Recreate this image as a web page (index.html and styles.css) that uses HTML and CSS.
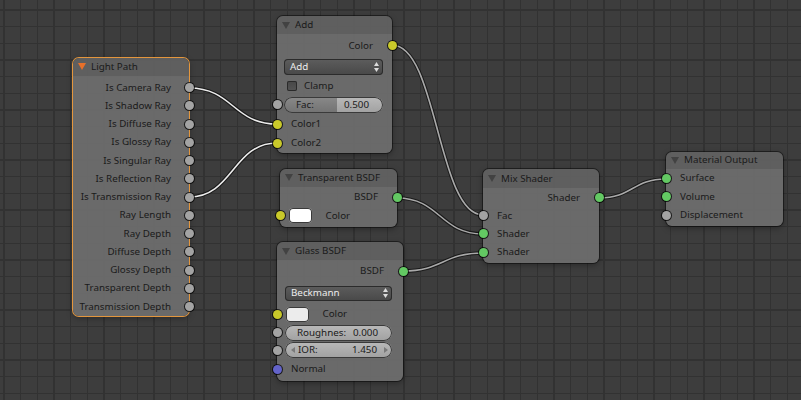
FILE: index.html
```html
<!DOCTYPE html>
<html>
<head>
<meta charset="utf-8">
<link rel="stylesheet" href="styles.css">
</head>
<body>
<div class="canvas">
  <svg class="links" width="801" height="400" viewBox="0 0 801 400">
    <g class="wire-outer">
      <path d="M189,88 C233,88 233,124 277,124"/>
      <path d="M189,197 C233,197 233,143 277,143"/>
      <path d="M392,45 C437.5,45 437.5,215 483,215"/>
      <path d="M397,198 C440,198 440,234 483,234"/>
      <path d="M403,271 C443,271 443,253 483,253"/>
      <path d="M599,198 C632.5,198 632.5,179 666,179"/>
    </g>
    <g class="wire-inner hi">
      <path d="M189,88 C233,88 233,124 277,124"/>
      <path d="M189,197 C233,197 233,143 277,143"/>
    </g>
    <g class="wire-inner">
      <path d="M392,45 C437.5,45 437.5,215 483,215"/>
      <path d="M397,198 C440,198 440,234 483,234"/>
      <path d="M403,271 C443,271 443,253 483,253"/>
      <path d="M599,198 C632.5,198 632.5,179 666,179"/>
    </g>
  </svg>

  <!-- Light Path -->
  <div class="node n-light active">
    <div class="head"><svg class="tri" width="8" height="7" viewBox="0 0 8 7"><path d="M0,0 L8,0 L4,7 Z"/></svg><span>Light Path</span></div>
    <div class="rows lp-rows">
      <div class="row out lp"><span>Is Camera Ray</span><i class="sock s-grey"></i></div>
      <div class="row out lp"><span>Is Shadow Ray</span><i class="sock s-grey"></i></div>
      <div class="row out lp"><span>Is Diffuse Ray</span><i class="sock s-grey"></i></div>
      <div class="row out lp"><span>Is Glossy Ray</span><i class="sock s-grey"></i></div>
      <div class="row out lp"><span>Is Singular Ray</span><i class="sock s-grey"></i></div>
      <div class="row out lp"><span>Is Reflection Ray</span><i class="sock s-grey"></i></div>
      <div class="row out lp"><span>Is Transmission Ray</span><i class="sock s-grey"></i></div>
      <div class="row out lp"><span>Ray Length</span><i class="sock s-grey"></i></div>
      <div class="row out lp"><span>Ray Depth</span><i class="sock s-grey"></i></div>
      <div class="row out lp"><span>Diffuse Depth</span><i class="sock s-grey"></i></div>
      <div class="row out lp"><span>Glossy Depth</span><i class="sock s-grey"></i></div>
      <div class="row out lp"><span>Transparent Depth</span><i class="sock s-grey"></i></div>
      <div class="row out lp"><span>Transmission Depth</span><i class="sock s-grey"></i></div>
    </div>
  </div>

  <!-- Add -->
  <div class="node n-add">
    <div class="head"><svg class="tri" width="8" height="7" viewBox="0 0 8 7"><path d="M0,0 L8,0 L4,7 Z"/></svg><span>Add</span></div>
    <div class="row out h23"><span>Color</span><i class="sock s-yellow"></i></div>
    <div class="row h19">
      <div class="select add-w"><span>Add</span><svg class="updown" width="5" height="10" viewBox="0 0 5 10"><path d="M0,4 L2.5,0 L5,4 Z M0,6 L5,6 L2.5,10 Z"/></svg></div>
    </div>
    <div class="row h19"><span class="check"></span><span class="check-label">Clamp</span></div>
    <div class="row h19-5">
      <i class="sock s-grey in-sock"></i>
      <div class="slider fac add-w"><span>Fac:</span><span>0.500</span></div>
    </div>
    <div class="row in h19"><i class="sock s-yellow in-sock"></i><span>Color1</span></div>
    <div class="row in h19"><i class="sock s-yellow in-sock"></i><span>Color2</span></div>
  </div>

  <!-- Transparent BSDF -->
  <div class="node n-trans">
    <div class="head"><svg class="tri" width="8" height="7" viewBox="0 0 8 7"><path d="M0,0 L8,0 L4,7 Z"/></svg><span>Transparent BSDF</span></div>
    <div class="row out h21"><span>BSDF</span><i class="sock s-green"></i></div>
    <div class="row h16"><i class="sock s-yellow in-sock"></i><span class="swatch white"></span><span class="swatch-label">Color</span></div>
  </div>

  <!-- Glass BSDF -->
  <div class="node n-glass">
    <div class="head"><svg class="tri" width="8" height="7" viewBox="0 0 8 7"><path d="M0,0 L8,0 L4,7 Z"/></svg><span>Glass BSDF</span></div>
    <div class="row out h22"><span>BSDF</span><i class="sock s-green"></i></div>
    <div class="row h22">
      <div class="select glass-w"><span>Beckmann</span><svg class="updown" width="5" height="10" viewBox="0 0 5 10"><path d="M0,4 L2.5,0 L5,4 Z M0,6 L5,6 L2.5,10 Z"/></svg></div>
    </div>
    <div class="row h20"><i class="sock s-yellow in-sock"></i><span class="swatch offwhite"></span><span class="swatch-label">Color</span></div>
    <div class="row h17"><i class="sock s-grey in-sock"></i><div class="slider glass-w"><span>Roughnes:</span><span>0.000</span></div></div>
    <div class="row h18"><i class="sock s-grey in-sock"></i><div class="slider num glass-w"><svg class="arr" width="4" height="6" viewBox="0 0 4 6"><path d="M4,0 L0,3 L4,6 Z"/></svg><span class="num-label">IOR:</span><span class="num-val">1.450</span><svg class="arr" width="4" height="6" viewBox="0 0 4 6"><path d="M0,0 L4,3 L0,6 Z"/></svg></div></div>
    <div class="row in h20"><i class="sock s-blue in-sock"></i><span>Normal</span></div>
  </div>

  <!-- Mix Shader -->
  <div class="node n-mix">
    <div class="head"><svg class="tri" width="8" height="7" viewBox="0 0 8 7"><path d="M0,0 L8,0 L4,7 Z"/></svg><span>Mix Shader</span></div>
    <div class="row out h19"><span>Shader</span><i class="sock s-green"></i></div>
    <div class="row in h17"><i class="sock s-grey in-sock"></i><span>Fac</span></div>
    <div class="row in h18-75"><i class="sock s-green in-sock"></i><span>Shader</span></div>
    <div class="row in h18-75"><i class="sock s-green in-sock"></i><span>Shader</span></div>
  </div>

  <!-- Material Output -->
  <div class="node n-mat">
    <div class="head"><svg class="tri" width="8" height="7" viewBox="0 0 8 7"><path d="M0,0 L8,0 L4,7 Z"/></svg><span>Material Output</span></div>
    <div class="row in h18-35"><i class="sock s-green in-sock"></i><span>Surface</span></div>
    <div class="row in h18-35"><i class="sock s-green in-sock"></i><span>Volume</span></div>
    <div class="row in h18-35"><i class="sock s-grey in-sock"></i><span>Displacement</span></div>
  </div>
</div>
</body>
</html>
```

FILE: styles.css
```css
* { box-sizing: border-box; }
html, body { margin: 0; padding: 0; }
body {
  width: 801px;
  height: 400px;
  overflow: hidden;
  background: #3d3d3d;
  font-family: "Noto Sans", "DejaVu Sans", sans-serif;
  font-size: 9.8px;
  line-height: 12px;
  color: #1a1a1a;
}

.canvas {
  position: relative;
  width: 801px;
  height: 400px;
  overflow: hidden;
  background-color: #3d3d3d;
  background-image:
    repeating-linear-gradient(to right, transparent 0, transparent 3.2px, #323232 3.2px, #323232 4.8px, transparent 4.8px, transparent 16.667px),
    repeating-linear-gradient(to bottom, transparent 0, transparent 9.2px, #323232 9.2px, #323232 10.8px, transparent 10.8px, transparent 16.667px);
}

.links {
  position: absolute;
  left: 0;
  top: 0;
}
.links path { fill: none; stroke-linecap: round; }
.wire-outer path { stroke: rgba(20, 20, 20, 0.85); stroke-width: 3.6; }
.wire-inner path { stroke: #a9a9a9; stroke-width: 1.6; }
.wire-inner.hi path { stroke: #ececec; }

/* nodes */
.node {
  position: absolute;
  background: rgba(110, 110, 110, 0.93);
  border-radius: 6px;
  box-shadow: 0 0 0 1px rgba(0, 0, 0, 0.45), 0 2px 6px rgba(0, 0, 0, 0.35);
}
.node.active {
  box-shadow: 0 0 0 1px #e3963d, 0 2px 6px rgba(0, 0, 0, 0.35);
}

.n-light { left: 73px; top: 57.5px; width: 116px; height: 258px; }
.n-add { left: 277px; top: 16px; width: 115px; height: 137px; }
.n-trans { left: 280px; top: 168.5px; width: 117px; height: 58px; }
.n-glass { left: 277px; top: 242px; width: 126px; height: 139px; }
.n-mix { left: 483px; top: 169.3px; width: 116px; height: 93.7px; }
.n-mat { left: 666px; top: 151.7px; width: 117px; height: 74.3px; }

.head {
  height: 18px;
  display: flex;
  align-items: center;
  padding-left: 5px;
  border-radius: 6px 6px 0 0;
  background: rgba(0, 0, 0, 0.1);
  color: #1a1a1a;
}
.n-mix .head { height: 19px; }
.n-mat .head { height: 17.5px; }
.head span { margin-left: 5px; }
.tri { display: block; fill: #424242; }
.active .tri { fill: #e8702a; }

.rows.lp-rows { padding-top: 3px; }

.row {
  position: relative;
  display: flex;
  align-items: center;
  height: 19px;
  white-space: nowrap;
}
.row.out { justify-content: flex-end; padding-right: 19px; }
.row.in { padding-left: 14px; }
.row.lp { height: 18.25px; padding-right: 18px; }

.h16 { height: 16px; }
.h17 { height: 17px; }
.h18 { height: 18px; }
.h18-35 { height: 18.35px; }
.h18-75 { height: 18.75px; }
.h19 { height: 19px; }
.h19-5 { height: 19.5px; }
.h20 { height: 20px; }
.h21 { height: 21px; }
.h22 { height: 22px; }
.h23 { height: 23px; }

/* sockets */
.sock {
  position: absolute;
  top: 50%;
  width: 9px;
  height: 9px;
  margin-top: -4.5px;
  border-radius: 50%;
  box-shadow: 0 0 0 1px rgba(0, 0, 0, 0.75);
}
.row .sock { right: -4.5px; }
.row .sock.in-sock { left: -4.5px; right: auto; }
.s-grey { background: #a3a3a3; }
.s-yellow { background: #c9c92a; }
.s-green { background: #63c963; }
.s-blue { background: #6363c9; }

/* dropdown */
.select {
  height: 16px;
  flex: 1;
  border-radius: 4px;
  background: linear-gradient(#5d5d5d, #484848);
  box-shadow: inset 0 0 0 1px #2b2b2b;
  color: #ececec;
  display: flex;
  align-items: center;
  justify-content: space-between;
  padding: 0 4px 0 6px;
}
.add-w { margin: 0 9px 0 7px; }
.glass-w { margin: 0 11px 0 8px; }
.n-glass .select { height: 15px; }
.updown { fill: #dcdcdc; display: block; }

/* checkbox */
.check {
  width: 10px;
  height: 10px;
  margin-left: 10px;
  border-radius: 2px;
  background: linear-gradient(#474747, #555555);
  box-shadow: inset 0 0 0 1px #2a2a2a;
}
.check-label { margin-left: 7px; }

/* sliders */
.slider {
  flex: 1;
  height: 16px;
  border-radius: 8px;
  box-shadow: inset 0 0 0 1px #3a3a3a;
  background:
    linear-gradient(rgba(255, 255, 255, 0.08), rgba(0, 0, 0, 0.1)),
    #b3b3b3;
  display: flex;
  align-items: center;
  justify-content: space-between;
  padding: 0 14px 0 12px;
  color: #1a1a1a;
}
.slider.fac {
  background:
    linear-gradient(rgba(255, 255, 255, 0.08), rgba(0, 0, 0, 0.1)),
    linear-gradient(to right, #7f7f7f 0, #7f7f7f 53.5%, #b3b3b3 53.5%);
}
.slider.num { padding: 0 4px 0 6px; justify-content: flex-start; }
.arr { display: block; fill: #7a7a7a; }
.num-label { margin-left: 3px; }
.num-val { margin-left: auto; margin-right: 7px; }

/* color swatches */
.swatch {
  width: 23px;
  height: 15px;
  margin-left: 9px;
  border-radius: 4px;
  box-shadow: inset 0 0 0 1px #3a3a3a;
}
.swatch.white { background: #ffffff; }
.swatch.offwhite { background: #ececec; }
.swatch-label { margin-left: 13.5px; }
```
